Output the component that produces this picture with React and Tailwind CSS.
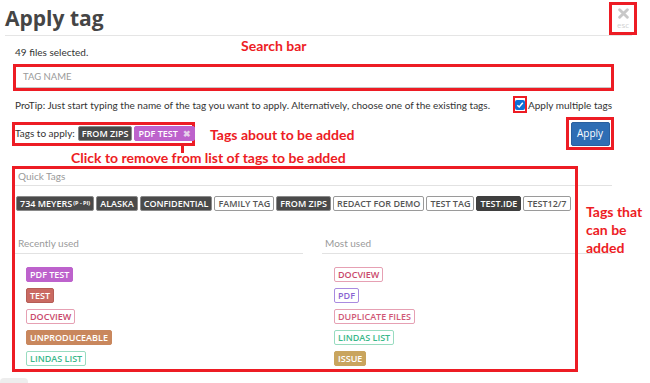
import React from "react";

const RED = "border-[#ed1c24]";
const LATO = { fontFamily: "Lato, sans-serif" };

function Chip({ children, cls }) {
  return (
    <span
      className={`inline-flex items-center h-[15px] px-[3px] rounded-[2px] border text-[9px] font-semibold leading-none whitespace-nowrap ${cls}`}
    >
      {children}
    </span>
  );
}

const dark = "bg-[#4a4a4a] border-[#8a8a8a] text-white";
const light = "bg-white border-[#9a9a9a] text-[#555]";

export default function App() {
  return (
    <div
      className="relative w-[650px] h-[383px] overflow-hidden bg-white text-[#333]"
      style={{ fontFamily: '"Open Sans", "Liberation Sans", sans-serif' }}
    >
      {/* header */}
      <div className="ml-[5px] w-[627px] h-[36px] border-b border-[#e5e5e5] flex justify-between items-start">
        <h1 className="mt-[5px] text-[21px] font-bold leading-[26px] text-[#454545]">Apply tag</h1>
        <div className={`mt-[2px] -mr-[5px] w-[28px] h-[33px] border-[3px] ${RED} flex flex-col items-center pt-[3px]`}>
          <svg width="11" height="11" viewBox="0 0 10 10">
            <path d="M1.5 1.5 L8.5 8.5 M8.5 1.5 L1.5 8.5" stroke="#c8c8c8" strokeWidth="2.6" strokeLinecap="round" />
          </svg>
          <span className="text-[8px] leading-[9px] text-[#d2d2d2] mt-[1px]">esc</span>
        </div>
      </div>

      {/* body */}
      <div className="pl-[12px] w-[614px]">
        <div className="relative mt-[9px] pl-[3px] text-[10px] leading-[14px] whitespace-nowrap" style={LATO}>
          49 files selected.
          <span className="absolute left-[229px] top-[-6px] text-[14px] font-bold text-[#ed1c24]" style={LATO}>
            Search bar
          </span>
        </div>

        <div className={`mt-[5px] ml-[1px] h-[27px] border-[3px] ${RED}`}>
          <div className="h-full border-b border-[#c8c8c8] flex items-center pl-[7px] text-[9.5px] text-[#9a9a9a]" style={LATO}>
            TAG NAME
          </div>
        </div>

        <div className="mt-[5px] flex items-center justify-between pl-[3px] text-[10px] leading-[14px] whitespace-nowrap" style={LATO}>
          <span>ProTip: Just start typing the name of the tag you want to apply. Alternatively, choose one of the existing tags.</span>
          <div className="flex items-center">
            <div className={`w-[14px] h-[17px] border-[2px] ${RED} flex items-center justify-center`}>
              <div className="w-[10px] h-[10px] rounded-[2px] bg-[#0e6fd6] flex items-center justify-center">
                <svg width="8" height="8" viewBox="0 0 8 8">
                  <path d="M1.3 4.2 L3.2 6 L6.8 1.8" stroke="white" strokeWidth="1.5" fill="none" />
                </svg>
              </div>
            </div>
            <span className="ml-[1px] mr-[2px]">Apply multiple tags</span>
          </div>
        </div>

        <div className="relative mt-[4px] flex items-center justify-between">
          <div className={`h-[24px] w-[183px] border-[3px] ${RED} flex items-center gap-[2px] text-[10px] whitespace-nowrap`}>
            <span className="mr-[1px]" style={LATO}>Tags to apply:</span>
            <Chip cls={dark}>FROM ZIPS</Chip>
            <Chip cls="bg-[#bd62cc] border-[#bd62cc] text-white">
              PDF TEST<span className="ml-[5px] text-[#e6d0ea] text-[9px]">✖</span>
            </Chip>
          </div>
          <span className="absolute left-[198px] top-[7px] text-[14px] font-bold text-[#ed1c24] whitespace-nowrap" style={LATO}>
            Tags about to be added
          </span>
          <div className="absolute left-[169px] top-[28px] w-[3px] h-[8px] bg-[#ed1c24]" />
          <span className="absolute left-[59px] top-[30px] text-[14px] font-bold text-[#ed1c24] whitespace-nowrap" style={LATO}>
            Click to remove from list of tags to be added
          </span>
          <div className={`w-[48px] h-[33px] border-[3px] ${RED} flex items-center justify-center`}>
            <button className="w-[39px] h-[24px] rounded-[2px] bg-[#2e6db4] text-white text-[10px] border border-[#2a5f9e]">
              Apply
            </button>
          </div>
        </div>

        {/* quick tags panel */}
        <div className="relative mt-[16px] ml-[3px] w-[597px] pt-[3px]">
          <div className={`absolute left-[-3px] top-0 w-[566px] h-[206px] border-[3px] ${RED} pointer-events-none`} />
          <div className="text-[10px] leading-[14px] text-[#9a9a9a] pl-[3px] pb-[2px] border-b border-[#e2e2e2]" style={LATO}>
            Quick Tags
          </div>
          <div className="mt-[10px] flex gap-[2px] pl-[1px]">
            <Chip cls={dark}>
              734 MEYERS<span className="ml-[1px] text-[5.5px] font-bold">(P - PI)</span>
            </Chip>
            <Chip cls={dark}>ALASKA</Chip>
            <Chip cls={dark}>CONFIDENTIAL</Chip>
            <Chip cls={light}>FAMILY TAG</Chip>
            <Chip cls={dark}>FROM ZIPS</Chip>
            <Chip cls={light}>REDACT FOR DEMO</Chip>
            <Chip cls={light}>TEST TAG</Chip>
            <Chip cls="bg-[#3f3f3f] border-[#3f3f3f] text-white">TEST.IDE</Chip>
            <Chip cls={light}>TEST12/7</Chip>
          </div>

          <div className="mt-[25px] grid grid-cols-[288px_290px] gap-x-[19px]">
            <div>
              <div className="text-[10px] leading-[14px] text-[#9a9a9a] pl-[3px] pb-[3px] border-b border-[#e2e2e2]" style={LATO}>
                Recently used
              </div>
              <div className="mt-[13px] pl-[11px] flex flex-col items-start gap-[6px]">
                <Chip cls="bg-[#bd62cc] border-[#bd62cc] text-white">PDF TEST</Chip>
                <Chip cls="bg-[#c96a62] border-[#b55d56] text-white">TEST</Chip>
                <Chip cls="bg-white border-[#e6a0b3] text-[#c9486b]">DOCVIEW</Chip>
                <Chip cls="bg-[#c9875d] border-[#c9875d] text-white">UNPRODUCEABLE</Chip>
                <Chip cls="bg-white border-[#98dcc0] text-[#3ab88a]">LINDAS LIST</Chip>
              </div>
            </div>
            <div>
              <div className="text-[10px] leading-[14px] text-[#9a9a9a] pl-[3px] pb-[3px] border-b border-[#e2e2e2]" style={LATO}>
                Most used
              </div>
              <div className="mt-[13px] pl-[12px] flex flex-col items-start gap-[6px]">
                <Chip cls="bg-white border-[#e6a0b3] text-[#c9486b]">DOCVIEW</Chip>
                <Chip cls="bg-white border-[#a98be0] text-[#8a63d2]">PDF</Chip>
                <Chip cls="bg-white border-[#e6a0b3] text-[#d05876]">DUPLICATE FILES</Chip>
                <Chip cls="bg-white border-[#98dcc0] text-[#3ab88a]">LINDAS LIST</Chip>
                <Chip cls="bg-[#c9a55e] border-[#c9a55e] text-white">ISSUE</Chip>
              </div>
            </div>
          </div>

          <div
            className="absolute left-[571px] top-[37px] text-[14px] leading-[18px] font-bold text-[#ed1c24] whitespace-nowrap"
            style={LATO}
          >
            Tags that
            <br />
            can be
            <br />
            added
          </div>
        </div>
      </div>

      <div className="absolute left-0 top-[378px] w-[28px] h-[10px] rounded-[4px] bg-[#ededed]" />
    </div>
  );
}
